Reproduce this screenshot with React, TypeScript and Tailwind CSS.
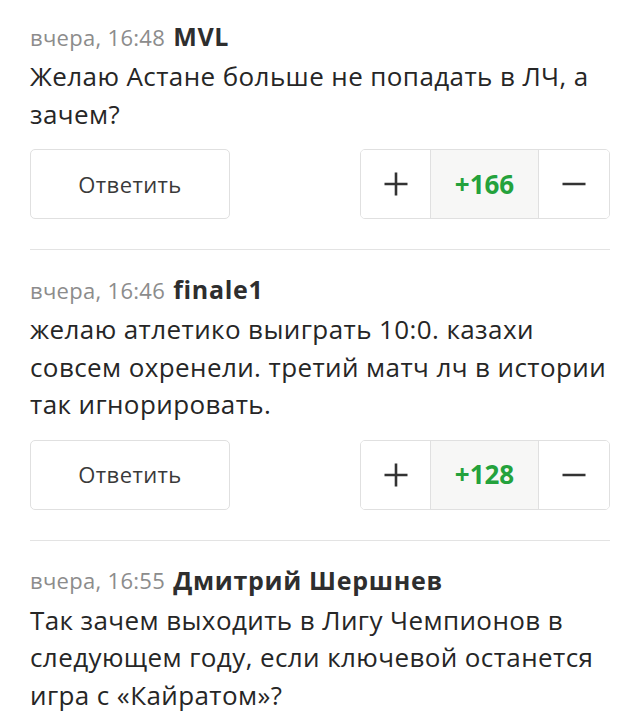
import React from 'react'

interface Comment {
  id: number
  time: string
  author: string
  text: string
  rating?: number
}

const comments: Comment[] = [
  {
    id: 1,
    time: 'вчера, 16:48',
    author: 'MVL',
    text: 'Желаю Астане больше не попадать в ЛЧ, а зачем?',
    rating: 166,
  },
  {
    id: 2,
    time: 'вчера, 16:46',
    author: 'finale1',
    text: 'желаю атлетико выиграть 10:0. казахи совсем охренели. третий матч лч в истории так игнорировать.',
    rating: 128,
  },
  {
    id: 3,
    time: 'вчера, 16:55',
    author: 'Дмитрий Шершнев',
    text: 'Так зачем выходить в Лигу Чемпионов в следующем году, если ключевой останется игра с «Кайратом»?',
  },
]

function PlusIcon() {
  return (
    <svg width="24" height="24" viewBox="0 0 24 24" fill="none">
      <path d="M12 0.5v23M0.5 12h23" stroke="#333" strokeWidth="2.6" />
    </svg>
  )
}

function MinusIcon() {
  return (
    <svg width="24" height="24" viewBox="0 0 24 24" fill="none">
      <path d="M0.5 12h23" stroke="#333" strokeWidth="2.6" />
    </svg>
  )
}

function CommentItem({ comment, first }: { comment: Comment; first: boolean }) {
  return (
    <div
      className={`pb-[30px] ${
        first ? 'pt-5' : 'pt-[23px] border-t border-[#e3e3e3]'
      }`}
    >
      {/* meta line */}
      <div className="h-[34px] flex items-center gap-2 whitespace-nowrap">
        <span className="text-[22px] text-[#8c8c8c] tracking-[0.3px]">
          {comment.time}
        </span>
        <span className="text-[25px] font-bold text-[#2e2e2e] tracking-[0.7px]">
          {comment.author}
        </span>
      </div>

      {/* body */}
      <p className="mt-1 text-[26px] leading-[37.5px] text-[#262626] tracking-[0.4px]">
        {comment.text}
      </p>

      {comment.rating !== undefined && (
        <div className="mt-4 flex justify-between items-stretch h-[70px]">
          <button className="w-[200px] rounded-[5px] border border-[#e0e0e0] bg-white text-[22px] text-[#3a3a3a] tracking-[0.4px]">
            Ответить
          </button>
          <div className="w-[250px] flex rounded-[5px] border border-[#e0e0e0] overflow-hidden">
            <button className="w-[69px] flex items-center justify-center bg-white">
              <PlusIcon />
            </button>
            <div className="flex-1 flex items-center justify-center bg-[#f7f7f6] border-x border-[#e0e0e0] text-[26px] font-bold text-[#24a23c]">
              +{comment.rating}
            </div>
            <button className="w-[70px] flex items-center justify-center bg-white">
              <MinusIcon />
            </button>
          </div>
        </div>
      )}
    </div>
  )
}

export default function App() {
  return (
    <div
      className="w-[640px] h-[725px] overflow-hidden bg-white px-[30px]"
      style={{ fontFamily: '"Open Sans", "Noto Sans", sans-serif' }}
    >
      {comments.map((c, i) => (
        <CommentItem key={c.id} comment={c} first={i === 0} />
      ))}
    </div>
  )
}
